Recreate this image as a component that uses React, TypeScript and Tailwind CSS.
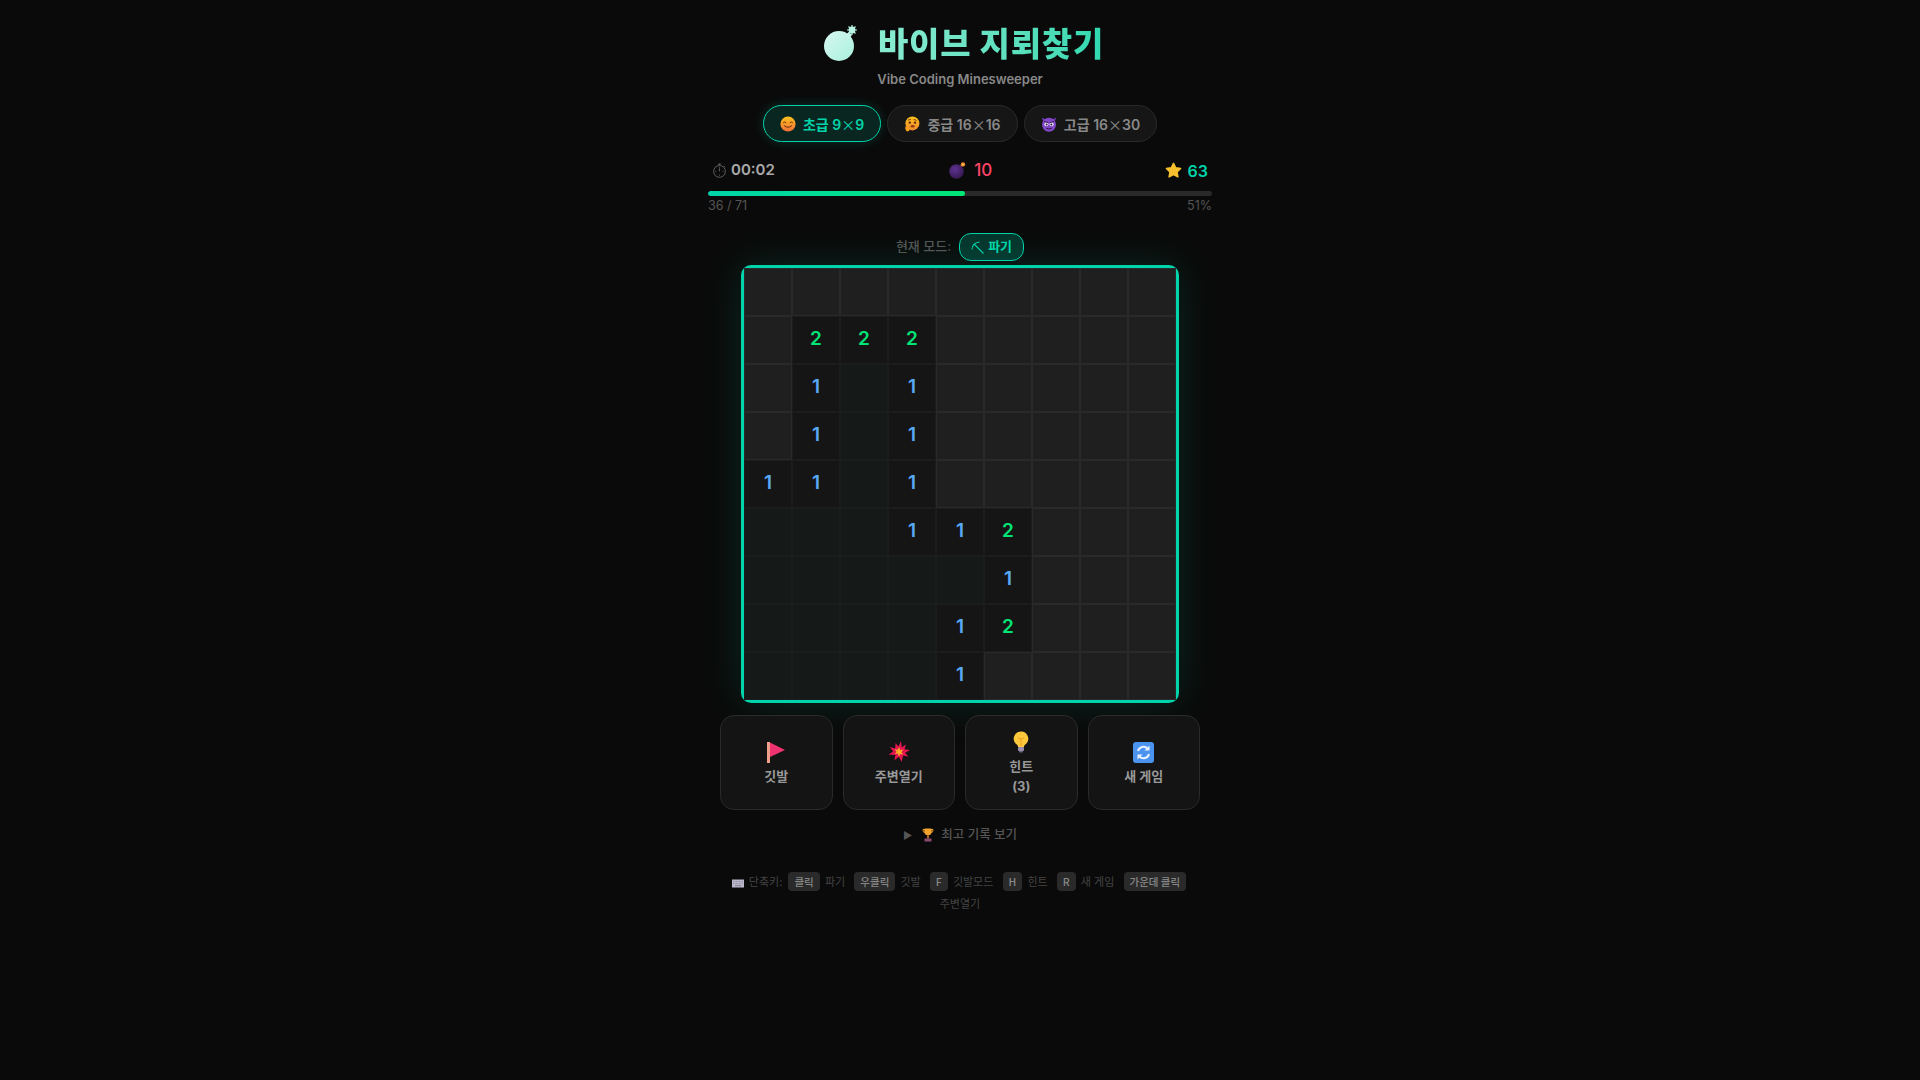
import type { ReactNode } from 'react';

const board = [
  '#########',
  '#222#####',
  '#1.1#####',
  '#1.1#####',
  '11.1#####',
  '...112###',
  '.....1###',
  '....12###',
  '....1####',
];

function Cell({ value }: { value: string }) {
  if (value === '#') {
    return <div className="h-12 w-12 border border-[#2a2a2a] bg-[#1f1f1f]" />;
  }
  if (value === '.') {
    return <div className="h-12 w-12 border border-[#1c1c1c] bg-[#151a18]" />;
  }
  return (
    <div
      className={`flex h-12 w-12 items-center justify-center border border-[#1c1c1c] bg-[#151515] pb-[2px] text-[19px] font-semibold ${
        value === '1' ? 'text-[#5aa9f8]' : 'text-[#00e676]'
      }`}
    >
      {value}
    </div>
  );
}

function TitleBomb() {
  return (
    <svg width="34" height="36" viewBox="0 0 34 36" className="shrink-0">
      <defs>
        <linearGradient id="titleBomb" x1="0" y1="0" x2="1" y2="1">
          <stop offset="0" stopColor="#d8f8f0" />
          <stop offset="1" stopColor="#a8f0dc" />
        </linearGradient>
      </defs>
      <circle cx="16" cy="21" r="15" fill="url(#titleBomb)" />
      <path d="M22 10l4-3 3 3-3 4z" fill="#c4f5e8" />
      <circle cx="29" cy="5" r="3.4" fill="#b8f3e3" />
      <path d="M29 0v10M24 5h10M25.5 1.5l7 7M32.5 1.5l-7 7" stroke="#b8f3e3" strokeWidth="1.2" />
    </svg>
  );
}

function SmileIcon() {
  return (
    <svg width="16" height="16" viewBox="0 0 16 16">
      <defs>
        <linearGradient id="smile" x1="0" y1="0" x2="0" y2="1">
          <stop offset="0" stopColor="#fcc21b" />
          <stop offset="1" stopColor="#f0703a" />
        </linearGradient>
      </defs>
      <circle cx="8" cy="8" r="7.6" fill="url(#smile)" />
      <path d="M3.4 6.6q1.3-1.6 2.6 0M10 6.6q1.3-1.6 2.6 0M4.4 9.8q3.6 3.2 7.2 0" fill="none" stroke="#6d2f12" strokeWidth="1" strokeLinecap="round" />
    </svg>
  );
}

function ThinkIcon() {
  return (
    <svg width="16" height="16" viewBox="0 0 16 16">
      <defs>
        <linearGradient id="think" x1="0" y1="0" x2="0" y2="1">
          <stop offset="0" stopColor="#fcc21b" />
          <stop offset="1" stopColor="#f28a2e" />
        </linearGradient>
      </defs>
      <circle cx="8.4" cy="7.4" r="7" fill="url(#think)" />
      <circle cx="5.8" cy="6.6" r="1.2" fill="#5a2a12" />
      <circle cx="11" cy="6.6" r="1.2" fill="#5a2a12" />
      <path d="M4 4.2l3-1M9.6 3.4l3 1" stroke="#6d2f12" strokeWidth="0.9" />
      <ellipse cx="8.6" cy="10.2" rx="2" ry="1.3" fill="#8a3a1a" />
      <path d="M1.4 10.6q2-1 3.4.6l1 2.2q-.6 2-2.6 2-2.4-1-1.8-4.8z" fill="#f8a01e" />
    </svg>
  );
}

function ImpIcon() {
  return (
    <svg width="16" height="16" viewBox="0 0 16 16">
      <path d="M1 1.4q.2 3 2.4 4.4l2-2.6Q2.600 3 1 1.400zM15 1.400q-.2 3-2.400 4.400l-2-2.600q2.800-.2 4.400-1.800z" fill="#7b3fc4" />
      <circle cx="8" cy="8.800" r="7" fill="#8246c9" />
      <circle cx="5.400" cy="8.200" r="2" fill="#f4f0fa" />
      <circle cx="10.600" cy="8.200" r="2" fill="#f4f0fa" />
      <circle cx="5.600" cy="8.400" r="1" fill="#2b1540" />
      <circle cx="10.400" cy="8.400" r="1" fill="#2b1540" />
      <path d="M3.400 5.600l3.400 1M12.600 5.600l-3.400 1M5.400 12.400q2.600 1.400 5.200 0" fill="none" stroke="#2b1540" strokeWidth="0.9" strokeLinecap="round" />
    </svg>
  );
}

function StopwatchIcon() {
  return (
    <svg width="15" height="15" viewBox="0 0 15 15" fill="none" stroke="#666" strokeWidth="0.9">
      <circle cx="7.500" cy="8.400" r="5.900" />
      <path d="M6 1h3M7.500 1v1.500M7.500 4.200v1M3.400 8.400h1M10.600 8.400h1M7.500 11.600v1M7.500 8.400V5.400M12 3.200l1 1" />
    </svg>
  );
}

function PurpleBomb() {
  return (
    <svg width="17" height="17" viewBox="0 0 17 17">
      <defs>
        <radialGradient id="purpleBomb" cx="0.4" cy="0.35" r="0.7">
          <stop offset="0" stopColor="#5e3390" />
          <stop offset="1" stopColor="#34184f" />
        </radialGradient>
      </defs>
      <circle cx="7.500" cy="9.500" r="7.300" fill="url(#purpleBomb)" />
      <path d="M11.500 4l1.500-1.200" stroke="#7a5a3a" strokeWidth="1.200" />
      <circle cx="14" cy="2.400" r="2.200" fill="#f0882e" />
      <circle cx="14" cy="2.400" r="0.900" fill="#ffd166" />
    </svg>
  );
}

function StarIcon() {
  return (
    <svg width="17" height="17" viewBox="0 0 17 17">
      <path
        d="M8.500 1.300l2.200 4.500 4.900.700-3.600 3.500.9 4.900-4.400-2.300-4.400 2.300.9-4.900L1.400 6.500l4.900-.7z"
        fill="#f7c02e"
        stroke="#f7c02e"
        strokeWidth="1.500"
        strokeLinejoin="round"
      />
    </svg>
  );
}

function PickIcon() {
  return (
    <svg width="13" height="13" viewBox="0 0 13 13" fill="none" stroke="#00d4aa" strokeWidth="1.100">
      <path d="M12.500 12.500L3.500 3.500M1 8.500Q1 2 8.500 1" />
    </svg>
  );
}

function FlagIcon() {
  return (
    <svg width="22" height="22" viewBox="0 0 22 22">
      <rect x="2" y="1" width="3" height="21" fill="#f0a088" />
      <path d="M5 1.500l15 7.500-15 7z" fill="#ef3370" />
    </svg>
  );
}

function BoomIcon() {
  return (
    <svg width="22" height="22" viewBox="0 0 22 22">
      <path
        d="M13 0l.8 6.200L18 3.400l-1.500 4.800 5.500.8-4.800 2.700 3.300 4-5.400-1.200-1.500 6.500-2.700-5.200-4.500 3.400 1-5.200L.5 13.500l4.700-3L1.800 6l5.400 1.500L7.500 2l3 3.600z"
        fill="#e4154f"
      />
      <path d="M11 6l1.200 3 3-.6-1.700 2.500 1.700 2.500-3-.5L11 15.800 9.800 12.500l-3 .6 1.700-2.300-1.700-2.600 3 .6z" fill="#f9a825" />
    </svg>
  );
}

function BulbIcon() {
  return (
    <svg width="16" height="22" viewBox="0 0 16 22">
      <path d="M8 .5a7.200 7.200 0 0 0-4 13.200c.8.600 1 1.400 1 2.300h6c0-.9.200-1.700 1-2.300A7.200 7.200 0 0 0 8 .5z" fill="#fcc83c" />
      <path d="M5 7q3 2 6 0M8 8v7" stroke="#e8941e" strokeWidth="0.800" fill="none" />
      <rect x="5" y="16" width="6" height="4" rx="1" fill="#9a8fb0" />
      <rect x="6" y="20" width="4" height="1.500" rx="0.700" fill="#6c6380" />
    </svg>
  );
}

function RefreshIcon() {
  return (
    <svg width="21" height="21" viewBox="0 0 21 21">
      <rect width="21" height="21" rx="3" fill="#4a94f0" />
      <path d="M5 9a5.600 5.600 0 0 1 9.600-2.400" fill="none" stroke="#e8f2ff" strokeWidth="2" />
      <path d="M16.500 3.500v5h-5z" fill="#e8f2ff" />
      <path d="M16 12a5.600 5.600 0 0 1-9.600 2.400" fill="none" stroke="#e8f2ff" strokeWidth="2" />
      <path d="M4.500 17.500v-5h5z" fill="#e8f2ff" />
    </svg>
  );
}

function TrophyIcon() {
  return (
    <svg width="12" height="14" viewBox="0 0 12 14">
      <path d="M1 1.500h2v3H2.200Q1 4.500 1 1.500zM11 1.500H9v3h.8q1.200 0 1.200-3z" fill="none" stroke="#e8962a" strokeWidth="1" />
      <path d="M2.500.5h7v3.500q0 3-3.500 3.500Q2.500 7 2.500 4z" fill="#f2a42c" />
      <rect x="5.200" y="7.500" width="1.600" height="3" fill="#d8862a" />
      <rect x="2.500" y="10.500" width="7" height="3" fill="#8b4a6e" />
    </svg>
  );
}

function KeyboardIcon() {
  return (
    <svg width="12" height="9" viewBox="0 0 12 9">
      <rect y="0.500" width="12" height="8" fill="#b9b6c9" />
      <path d="M1 2.500h10M1 4.500h10" stroke="#8b8799" strokeWidth="0.700" strokeDasharray="1 0.500" />
      <rect x="3" y="6" width="6" height="1.200" fill="#8b8799" />
    </svg>
  );
}

function Difficulty({ icon, label, size, width, active }: { icon: ReactNode; label: string; size: [string, string]; width: string; active?: boolean }) {
  return (
    <button
      className={`flex h-[37px] items-center justify-center gap-[7px] rounded-full text-[14px] font-semibold ${width} ${
        active
          ? 'border-[1.5px] border-[#00d4aa] bg-[#0a2620] text-[#00d4aa] shadow-[0_0_12px_rgba(0,212,170,0.2)]'
          : 'border border-[#2a2a2a] bg-[#161616] text-[#888]'
      }`}
    >
      {icon}
      <span className="whitespace-nowrap pt-[2px]">
        {label} {size[0]}
        <span className="font-['Noto_Sans_CJK_KR',sans-serif] font-normal">×</span>
        {size[1]}
      </span>
    </button>
  );
}

function ActionButton({ icon, children }: { icon: ReactNode; children: ReactNode }) {
  return (
    <button className="flex h-[95px] flex-col items-center justify-center gap-[3px] rounded-[14px] border border-[#2a2a2a] bg-[#141414] pt-[2px] text-[13px] font-bold leading-[20px] text-[#999]">
      {icon}
      <span>{children}</span>
    </button>
  );
}

function Key({ children }: { children: ReactNode }) {
  return (
    <kbd className="ml-[3px] mr-[2px] rounded-[4px] bg-[#2a2a2a] px-[6px] py-[2px] font-['Noto_Sans_CJK_KR',sans-serif] text-[10.500px] font-medium text-[#888]">
      {children}
    </kbd>
  );
}

export default function App() {
  return (
    <div className="flex min-h-screen flex-col items-center bg-[#0a0a0a] pt-[22px] font-['Inter','Noto_Sans_CJK_KR',sans-serif]">
      <h1 className="flex h-[42px] items-center gap-[21px] pl-[7px] font-['Noto_Sans_CJK_KR',sans-serif]">
        <TitleBomb />
        <span className="bg-gradient-to-r from-[#8aebd2] to-[#2dd8b0] bg-clip-text text-[33px] font-black tracking-[0.750px] text-transparent">
          바이브 지뢰찾기
        </span>
      </h1>
      <p className="mt-[5px] h-5 text-[13px] font-semibold leading-5 text-[#888]">Vibe Coding Minesweeper</p>

      <div className="mt-[16px] flex gap-[6px]">
        <Difficulty icon={<SmileIcon />} label="초급" size={['9', '9']} width="w-[118px]" active />
        <Difficulty icon={<ThinkIcon />} label="중급" size={['16', '16']} width="w-[131px]" />
        <Difficulty icon={<ImpIcon />} label="고급" size={['16', '30']} width="w-[133px]" />
      </div>

      <div className="mt-4 flex h-6 w-[504px] items-center justify-between px-1">
        <div className="flex items-center gap-[4px] pt-[1px] text-[15px] font-semibold text-[#aaa]">
          <StopwatchIcon />
          00:02
        </div>
        <div className="flex items-center gap-2 pl-[2px] pt-[1px] text-[17px] font-medium text-[#ff4466]">
          <PurpleBomb />
          10
        </div>
        <div className="flex items-center gap-[6px] pt-[1px] text-[16px] font-semibold text-[#00d4aa]">
          <StarIcon />
          63
        </div>
      </div>

      <div className="mt-[9px] h-[5px] w-[504px] overflow-hidden rounded-full bg-[#2a2a2a]">
        <div className="h-full w-[51%] rounded-full bg-gradient-to-r from-[#00d4aa] to-[#00e676]" />
      </div>
      <div className="mt-[3px] flex h-[14px] w-[504px] items-center justify-between text-[12.500px] text-[#555]">
        <span>36 / 71</span>
        <span>51%</span>
      </div>

      <div className="mt-[20px] flex h-7 items-center gap-[8px] text-[13px] text-[#555]">
        <span className="font-medium">현재 모드:</span>
        <span className="flex h-7 w-[65px] items-center justify-center gap-1 rounded-xl border border-[#00d4aa] bg-[#06352c] text-[13px] font-bold text-[#00d4aa]">
          <PickIcon />
          파기
        </span>
      </div>

      <div className="mt-1 grid grid-cols-9 rounded-[10px] border-[3px] border-[#00d4aa] shadow-[0_0_40px_rgba(0,212,170,0.15)]">
        {board.flatMap((row, y) => [...row].map((value, x) => <Cell key={`${y}-${x}`} value={value} />))}
      </div>

      <div className="mt-3 grid w-[480px] grid-cols-4 gap-[10px]">
        <ActionButton icon={<FlagIcon />}>깃발</ActionButton>
        <ActionButton icon={<BoomIcon />}>주변열기</ActionButton>
        <ActionButton icon={<BulbIcon />}>
          힌트
          <br />
          (3)
        </ActionButton>
        <ActionButton icon={<RefreshIcon />}>새 게임</ActionButton>
      </div>

      <div className="mt-[15px] flex h-5 items-center text-[12.500px] font-medium text-[#555]">
        <span className="mr-[10px] text-[10px]">▶</span>
        <TrophyIcon />
        <span className="ml-[7px]">최고 기록 보기</span>
      </div>

      <p className="mt-[26px] w-[480px] break-keep text-center text-[11px] leading-[22px] text-[#444]">
        <span className="mr-[5px] inline-block align-middle">
          <KeyboardIcon />
        </span>
        단축키: <Key>클릭</Key> 파기 &nbsp;<Key>우클릭</Key> 깃발 &nbsp;<Key>F</Key> 깃발모드 &nbsp;<Key>H</Key> 힌트 &nbsp;
        <Key>R</Key> 새 게임 &nbsp;<Key>가운데 클릭</Key> 주변열기
      </p>
    </div>
  );
}
